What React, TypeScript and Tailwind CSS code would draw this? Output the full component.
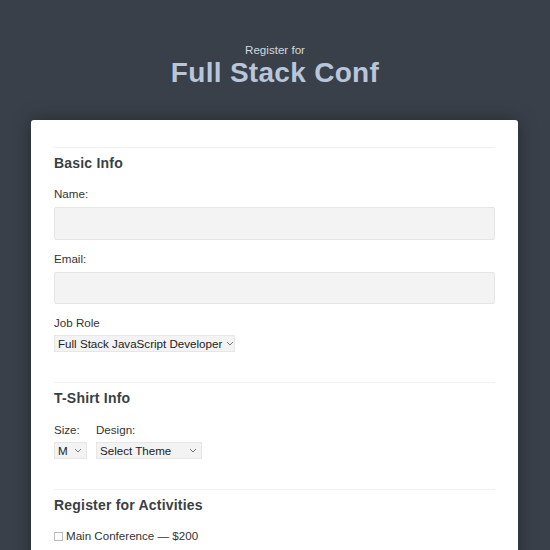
import React from "react";

function Chevron() {
  return (
    <svg width="8" height="5" viewBox="0 0 8 5" className="shrink-0">
      <path d="M1 1 L4 4 L7 1" fill="none" stroke="#666" strokeWidth="0.9" />
    </svg>
  );
}

function FakeSelect({ label, width }: { label: string; width: string }) {
  return (
    <div
      className={`flex items-center justify-between gap-[4px] h-[17px] bg-[#f3f3f3] border border-[#e6e6e6] pl-[3px] pr-[4px] text-[11.6px] text-[#222] whitespace-nowrap ${width}`}
    >
      <span className="leading-none">{label}</span>
      <Chevron />
    </div>
  );
}

function Section({ title, children }: { title: string; children: React.ReactNode }) {
  return (
    <div className="border-t border-[#f0f0f0]">
      <h2 className="mt-[7px] text-[14px] font-bold text-[#3a3f46] leading-[16px] tracking-[0.2px]">{title}</h2>
      {children}
    </div>
  );
}

export default function App() {
  return (
    <div className="w-[550px] h-[550px] overflow-hidden bg-[#394049] font-['Liberation_Sans',Arial,sans-serif]">
      <header className="flex flex-col items-center pt-[43px]">
        <p className="text-[11.6px] leading-[14px] text-[#d3d8df]">Register for</p>
        <h1 className="text-[28px] font-bold leading-[32px] text-[#b8c6dc] tracking-[0.3px]">Full Stack Conf</h1>
      </header>

      <div className="ml-[31px] mt-[31px] w-[487px] bg-white rounded-[3px] shadow-[0_0_18px_rgba(0,0,0,0.35)] px-[23px] pt-[27px] pb-[40px]">
        <Section title="Basic Info">
          <label className="block mt-[16px] text-[11.6px] leading-[14px] text-[#333]">Name:</label>
          <div className="mt-[6px] h-[33px] bg-[#f3f3f3] border border-[#e5e5e5] rounded-[2px]" />
          <label className="block mt-[12px] text-[11.6px] leading-[14px] text-[#333]">Email:</label>
          <div className="mt-[6px] h-[32px] bg-[#f3f3f3] border border-[#e5e5e5] rounded-[2px]" />
          <label className="block mt-[12px] text-[11.6px] leading-[14px] text-[#333]">Job Role</label>
          <div className="mt-[5px] flex">
            <FakeSelect label="Full Stack JavaScript Developer" width="w-[181px]" />
          </div>
        </Section>

        <div className="mt-[30px]">
          <Section title="T-Shirt Info">
            <div className="mt-[17px] flex gap-[9px]">
              <div className="flex flex-col">
                <span className="text-[11.6px] leading-[14px] text-[#333]">Size:</span>
                <div className="mt-[5px]">
                  <FakeSelect label="M" width="w-[33px]" />
                </div>
              </div>
              <div className="flex flex-col">
                <span className="text-[11.6px] leading-[14px] text-[#333]">Design:</span>
                <div className="mt-[5px]">
                  <FakeSelect label="Select Theme" width="w-[106px]" />
                </div>
              </div>
            </div>
          </Section>
        </div>

        <div className="mt-[30px]">
          <Section title="Register for Activities">
            <label className="mt-[16px] flex items-center gap-[3px] text-[11.6px] leading-[14px] text-[#333]">
              <span className="inline-block w-[9px] h-[9px] border border-[#bbb] bg-white" />
              Main Conference — $200
            </label>
          </Section>
        </div>
      </div>
    </div>
  );
}
